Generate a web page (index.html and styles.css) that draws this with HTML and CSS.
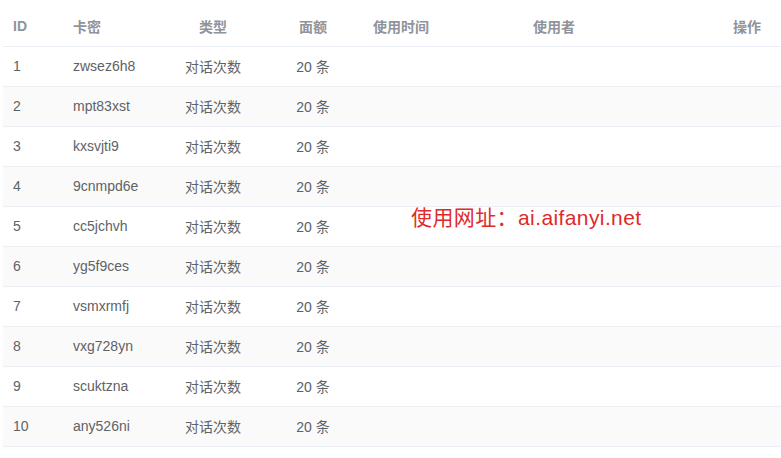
FILE: index.html
```html
<!DOCTYPE html>
<html lang="zh-CN">
<head>
    <meta charset="UTF-8">
    <meta name="viewport" content="width=device-width, initial-scale=1.0">
    <title>卡密列表</title>
    <link rel="stylesheet" href="styles.css">
</head>
<body>
    <div class="wrap">
        <table class="card-table">
            <colgroup>
                <col class="c-id">
                <col class="c-key">
                <col class="c-type">
                <col class="c-amount">
                <col class="c-time">
                <col class="c-user">
                <col class="c-op">
            </colgroup>
            <thead>
                <tr>
                    <th>ID</th>
                    <th>卡密</th>
                    <th class="center">类型</th>
                    <th class="center">面额</th>
                    <th>使用时间</th>
                    <th class="center">使用者</th>
                    <th class="right">操作</th>
                </tr>
            </thead>
            <tbody>
                <tr><td>1</td><td>zwsez6h8</td><td class="center">对话次数</td><td class="center">20 条</td><td></td><td></td><td></td></tr>
                <tr><td>2</td><td>mpt83xst</td><td class="center">对话次数</td><td class="center">20 条</td><td></td><td></td><td></td></tr>
                <tr><td>3</td><td>kxsvjti9</td><td class="center">对话次数</td><td class="center">20 条</td><td></td><td></td><td></td></tr>
                <tr><td>4</td><td>9cnmpd6e</td><td class="center">对话次数</td><td class="center">20 条</td><td></td><td></td><td></td></tr>
                <tr><td>5</td><td>cc5jchvh</td><td class="center">对话次数</td><td class="center">20 条</td><td></td><td></td><td></td></tr>
                <tr><td>6</td><td>yg5f9ces</td><td class="center">对话次数</td><td class="center">20 条</td><td></td><td></td><td></td></tr>
                <tr><td>7</td><td>vsmxrmfj</td><td class="center">对话次数</td><td class="center">20 条</td><td></td><td></td><td></td></tr>
                <tr><td>8</td><td>vxg728yn</td><td class="center">对话次数</td><td class="center">20 条</td><td></td><td></td><td></td></tr>
                <tr><td>9</td><td>scuktzna</td><td class="center">对话次数</td><td class="center">20 条</td><td></td><td></td><td></td></tr>
                <tr><td>10</td><td>any526ni</td><td class="center">对话次数</td><td class="center">20 条</td><td></td><td></td><td></td></tr>
            </tbody>
        </table>
        <div class="watermark">使用网址：ai.aifanyi.net</div>
    </div>
</body>
</html>
```

FILE: styles.css
```css
body {
    margin: 0;
    background: #fff;
    font-family: "Liberation Sans", "Noto Sans CJK SC", sans-serif;
    overflow: hidden;
}

.wrap {
    position: relative;
    padding: 7px 0 0 3px;
}

.card-table {
    width: 778px;
    border-collapse: collapse;
    table-layout: fixed;
    font-size: 14px;
    color: #606266;
}

.c-id { width: 60px; }
.c-key { width: 100px; }
.c-type { width: 100px; }
.c-amount { width: 100px; }
.c-time { width: 120px; }
.c-user { width: 142px; }
.c-op { width: 156px; }

.card-table th,
.card-table td {
    height: 37px;
    padding: 0 10px 2px;
    text-align: left;
    border-bottom: 1px solid #ebeef5;
    white-space: nowrap;
}

.card-table thead th {
    color: #909399;
    font-weight: bold;
}

.card-table tbody tr:nth-child(even) td {
    background: #fafafa;
}

.card-table .center { text-align: center; }
.card-table .right { text-align: right; padding-right: 20px; }

.watermark {
    position: absolute;
    left: 411px;
    top: 201px;
    font-size: 21px;
    letter-spacing: 0.4px;
    color: #e02a2a;
    white-space: nowrap;
}
```
